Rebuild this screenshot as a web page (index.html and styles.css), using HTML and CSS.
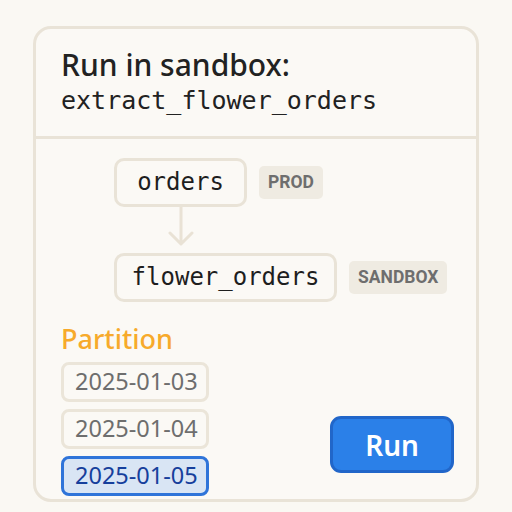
FILE: index.html
```html
<!DOCTYPE html>
<html>
<head>
<meta charset="utf-8">
<link rel="stylesheet" href="styles.css">
</head>
<body>
<div class="card">
  <div class="head">
    <div class="title">Run in sandbox:</div>
    <div class="fn">extract_flower_orders</div>
  </div>
  <div class="main">
    <div class="lineage">
      <div class="row">
        <div class="node node-src">orders</div>
        <div class="badge">PROD</div>
      </div>
      <div class="arrow">
        <svg width="40" height="46" viewBox="0 0 40 46">
          <path d="M20 0 V37 M9 26 L20 37 L31 26" fill="none" stroke="#e9e2d5" stroke-width="3" stroke-linecap="round" stroke-linejoin="round"/>
        </svg>
      </div>
      <div class="row">
        <div class="node node-dst">flower_orders</div>
        <div class="badge">SANDBOX</div>
      </div>
    </div>
    <div class="label">Partition</div>
    <div class="bottom">
      <div class="dates">
        <div class="date">2025-01-03</div>
        <div class="date">2025-01-04</div>
        <div class="date selected">2025-01-05</div>
      </div>
      <button class="run">Run</button>
    </div>
  </div>
</div>
</body>
</html>
```

FILE: styles.css
```css
html, body {
  margin: 0;
  padding: 0;
  background: #faf8f3;
}
body {
  font-family: "Noto Sans", Inter, sans-serif;
  color: #222;
}
.card {
  box-sizing: border-box;
  width: 446px;
  height: 476px;
  margin: 26px 0 0 33px;
  border: 3px solid #e9e3d7;
  border-radius: 18px;
  background: #fbf9f5;
}
.head {
  padding: 16px 20px 18px 25px;
  border-bottom: 3px solid #e9e3d7;
}
.title {
  font-size: 30px;
  line-height: 39px;
  font-weight: 500;
  color: #222;
}
.fn {
  font-family: "DejaVu Sans Mono", "Liberation Mono", monospace;
  font-size: 25px;
  line-height: 34px;
  color: #222;
}
.main {
  padding: 19px 20px 0 25px;
}
.lineage {
  padding-left: 53px;
}
.row {
  display: flex;
  align-items: center;
  gap: 12px;
}
.node {
  box-sizing: border-box;
  height: 49px;
  border: 3px solid #e9e3d7;
  border-radius: 10px;
  font-family: "DejaVu Sans Mono", "Liberation Mono", monospace;
  font-size: 24px;
  line-height: 43px;
  text-align: center;
  color: #1e1e1e;
}
.node-src {
  width: 133px;
}
.node-dst {
  width: 223px;
}
.badge {
  height: 33px;
  padding: 0 9px;
  border-radius: 5px;
  background: #efebe2;
  font-family: Roboto, "Liberation Sans", sans-serif;
  font-weight: 700;
  font-size: 17.5px;
  line-height: 33px;
  color: #6e6e6e;
}
.arrow {
  width: 133px;
  height: 46px;
  display: flex;
  justify-content: center;
}
.label {
  margin-top: 20px;
  font-size: 27px;
  line-height: 34px;
  font-weight: 500;
  color: #f7aa2b;
}
.bottom {
  display: flex;
  justify-content: space-between;
  align-items: flex-end;
  margin-top: 6px;
}
.dates {
  display: flex;
  flex-direction: column;
  gap: 7px;
}
.date {
  box-sizing: border-box;
  width: 148px;
  height: 40px;
  padding-left: 11px;
  border: 3px solid #ebe5d9;
  border-radius: 8px;
  font-family: "Noto Sans", sans-serif;
  font-size: 23.5px;
  line-height: 33px;
  color: #6e6e6e;
}
.date.selected {
  background: #d9e5f4;
  border-color: #2f74d9;
  color: #163f9c;
}
.run {
  box-sizing: border-box;
  width: 124px;
  height: 57px;
  margin-bottom: 23px;
  margin-right: 2px;
  border: 3px solid #2166c9;
  border-radius: 11px;
  background: #2b80e8;
  color: #fff;
  font-family: "Noto Sans", sans-serif;
  font-weight: 600;
  font-size: 28px;
  line-height: 50px;
  padding: 0;
}
```
